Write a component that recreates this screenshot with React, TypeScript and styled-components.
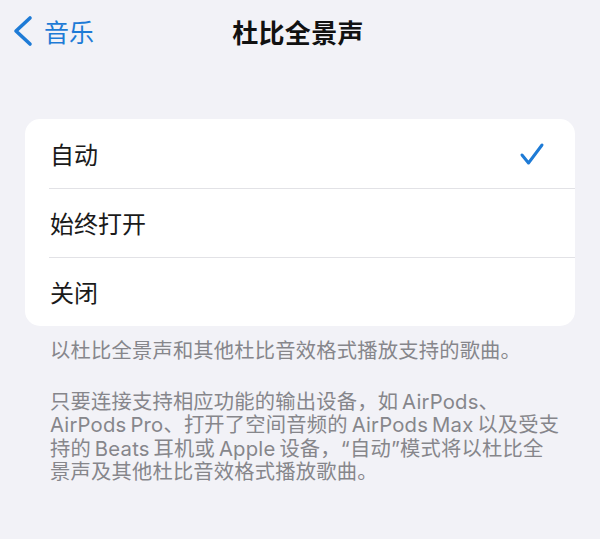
import React from "react";
import styled, { createGlobalStyle } from "styled-components";

const Global = createGlobalStyle`
  html, body {
    margin: 0;
    padding: 0;
    background: #f2f2f7;
  }
  body {
    font-family: "Inter", "Noto Sans CJK SC", sans-serif;
    -webkit-font-smoothing: antialiased;
  }
`;

const Page = styled.div`
  width: 600px;
  min-height: 539px;
  background: #f2f2f7;
  display: flex;
  flex-direction: column;
`;

const NavBar = styled.div`
  height: 62px;
  display: grid;
  grid-template-columns: 1fr auto 1fr;
  align-items: center;
`;

const BackButton = styled.div`
  display: flex;
  align-items: center;
  gap: 10px;
  padding-left: 12px;
  color: #1e7bd6;
  font-size: 25px;
  font-family: "Noto Sans CJK SC", sans-serif;
`;

const Title = styled.div`
  font-family: "Noto Sans CJK SC", sans-serif;
  font-size: 26px;
  font-weight: 700;
  color: #111;
  letter-spacing: 0.3px;
  margin-right: 4px;
`;

const Card = styled.div`
  margin: 57px 25px 0 25px;
  background: #ffffff;
  border-radius: 15px;
  overflow: hidden;
`;

const Row = styled.div<{ $divider?: boolean }>`
  position: relative;
  height: 69px;
  display: flex;
  align-items: center;
  justify-content: space-between;
  padding: 0 30px 0 25px;
  font-family: "Noto Sans CJK SC", sans-serif;
  font-size: 24px;
  color: #1a1a1a;
  &::before {
    content: "";
    display: ${(p) => (p.$divider ? "block" : "none")};
    position: absolute;
    top: 0;
    left: 24px;
    right: 0;
    height: 1px;
    background: #e2e2e6;
  }
`;

const Footer = styled.div`
  padding: 13px 30px 0 50px;
  display: flex;
  flex-direction: column;
  gap: 27px;
`;

const FootPara = styled.p`
  margin: 0;
  font-family: "Inter", "Noto Sans CJK SC", sans-serif;
  font-size: 20.3px;
  line-height: 23.5px;
  color: #86868b;
  letter-spacing: 0.2px;
`;

const Line = styled.span`
  display: block;
  white-space: nowrap;
`;

const Chevron = () => (
  <svg width="22" height="32" viewBox="0 0 22 32" fill="none">
    <path
      d="M18 3 L4 16 L18 29"
      stroke="#1e7bd6"
      strokeWidth="3.6"
      strokeLinecap="round"
      strokeLinejoin="round"
    />
  </svg>
);

const Check = () => (
  <svg width="26" height="24" viewBox="0 0 26 24" fill="none">
    <path
      d="M3 13 L9.5 21 L23 3"
      stroke="#1e7bd6"
      strokeWidth="3"
      strokeLinecap="round"
      strokeLinejoin="round"
    />
  </svg>
);

const options = [
  { label: "自动", checked: true },
  { label: "始终打开", checked: false },
  { label: "关闭", checked: false },
];

export default function App() {
  return (
    <>
      <Global />
      <Page>
        <NavBar>
          <BackButton>
            <Chevron />
            <span>音乐</span>
          </BackButton>
          <Title>杜比全景声</Title>
          <div />
        </NavBar>
        <Card>
          {options.map((o, i) => (
            <Row key={o.label} $divider={i > 0}>
              <span>{o.label}</span>
              {o.checked && <Check />}
            </Row>
          ))}
        </Card>
        <Footer>
          <FootPara>
            <Line>以杜比全景声和其他杜比音效格式播放支持的歌曲。</Line>
          </FootPara>
          <FootPara>
            <Line>只要连接支持相应功能的输出设备，如{"\u2009"}AirPods、</Line>
            <Line>AirPods{"\u2009"}Pro、打开了空间音频的{"\u2009"}AirPods{"\u2009"}Max{"\u2009"}以及受支</Line>
            <Line>持的{"\u2009"}Beats{"\u2009"}耳机或{"\u2009"}Apple{"\u2009"}设备，“自动”模式将以杜比全</Line>
            <Line>景声及其他杜比音效格式播放歌曲。</Line>
          </FootPara>
        </Footer>
      </Page>
    </>
  );
}
